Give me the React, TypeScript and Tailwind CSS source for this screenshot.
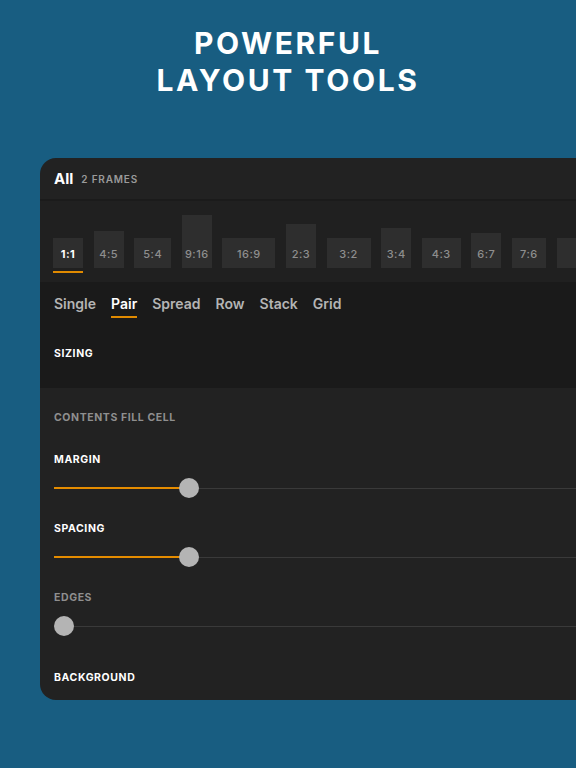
import React from "react";

const bars: { label: string; w: number; h: number; active?: boolean }[] = [
  { label: "1:1", w: 30, h: 30, active: true },
  { label: "4:5", w: 30, h: 37 },
  { label: "5:4", w: 37, h: 30 },
  { label: "9:16", w: 30, h: 53 },
  { label: "16:9", w: 53, h: 30 },
  { label: "2:3", w: 30, h: 44 },
  { label: "3:2", w: 44, h: 30 },
  { label: "3:4", w: 30, h: 40 },
  { label: "4:3", w: 39, h: 30 },
  { label: "6:7", w: 30, h: 35 },
  { label: "7:6", w: 34, h: 30 },
  { label: "", w: 48, h: 30 },
];

const tabs = ["Single", "Pair", "Spread", "Row", "Stack", "Grid"];

function Slider({ pos }: { pos: number }) {
  return (
    <div className="relative h-[22px] flex items-center">
      <div className="absolute left-0 right-0 h-px bg-[#3a3a3a]" />
      {pos > 0 && (
        <div
          className="absolute left-0 h-[1.5px] bg-[#e58c00]"
          style={{ width: pos }}
        />
      )}
      <div
        className="absolute w-[20px] h-[20px] rounded-full bg-[#b4b4b4]"
        style={{ left: pos - 10 < 0 ? 0 : pos - 10 }}
      />
    </div>
  );
}

const label = "font-bold text-[10.5px] tracking-[0.6px] leading-[14px]";

export default function App() {
  const font = { fontFamily: "Inter, 'Liberation Sans', sans-serif" };
  return (
    <div
      className="w-[576px] h-[768px] bg-[#185d81] overflow-hidden flex flex-col"
      style={font}
    >
      <div className="pt-[25px] h-[158px] flex flex-col items-center text-white font-bold text-[30px] leading-[37px] tracking-[2.6px]">
        <div>POWERFUL</div>
        <div>LAYOUT TOOLS</div>
      </div>
      <div className="ml-[40px] w-[560px] h-[542px] rounded-l-[16px] overflow-hidden bg-[#222222] flex flex-col">
        <div className="h-[41px] flex items-center pl-[14px] gap-[8px] pt-[2px]">
          <span className="text-white font-bold text-[15px]">All</span>
          <span className="text-[#9a9a9a] text-[10px] font-semibold tracking-[0.8px]">
            2 FRAMES
          </span>
        </div>
        <div className="h-[2px] bg-[#1b1b1b]" />
        <div className="h-[81px] bg-[#202020] pl-[13px] flex items-start overflow-hidden">
          <div className="flex items-end gap-[10.6px] mt-[14px]">
            {bars.map((b, i) => (
              <div key={i} className="flex flex-col shrink-0">
                <div
                  className="bg-[#2e2e2e] flex flex-col justify-end"
                  style={{ width: b.w, height: b.h }}
                >
                  <div
                    className={
                      "h-[28px] flex items-center justify-center text-[11px] tracking-[0.5px] " +
                      (b.active
                        ? "text-white font-bold"
                        : "text-[#8e8e8e] font-medium")
                    }
                  >
                    {b.label}
                  </div>
                </div>
                <div
                  className={
                    "mt-[3px] h-[2px] " +
                    (b.active ? "bg-[#e08a00]" : "bg-transparent")
                  }
                />
              </div>
            ))}
          </div>
        </div>
        <div className="h-[106px] bg-[#1a1a1a] pl-[14px] flex flex-col">
          <div className="flex gap-[15px] mt-[12px]">
            {tabs.map((t) => (
              <div key={t} className="flex flex-col">
                <span
                  className={
                    "text-[14px] font-semibold leading-[20px] " +
                    (t === "Pair" ? "text-white" : "text-[#b4b4b4]")
                  }
                >
                  {t}
                </span>
                <div
                  className={
                    "h-[2px] mt-[2px] " +
                    (t === "Pair" ? "bg-[#e08a00]" : "bg-transparent")
                  }
                />
              </div>
            ))}
          </div>
          <div className={"mt-[29px] text-white " + label}>SIZING</div>
        </div>
        <div className="flex-1 pl-[14px] flex flex-col">
          <div className={"mt-[23px] text-[#8f8f8f] " + label}>
            CONTENTS FILL CELL
          </div>
          <div className={"mt-[28px] text-white " + label}>MARGIN</div>
          <div className="mt-[10px]">
            <Slider pos={135} />
          </div>
          <div className={"mt-[23px] text-white " + label}>SPACING</div>
          <div className="mt-[10px]">
            <Slider pos={135} />
          </div>
          <div className={"mt-[23px] text-[#8f8f8f] " + label}>EDGES</div>
          <div className="mt-[10px]">
            <Slider pos={0} />
          </div>
          <div className={"mt-[34px] text-white " + label}>BACKGROUND</div>
        </div>
      </div>
    </div>
  );
}
